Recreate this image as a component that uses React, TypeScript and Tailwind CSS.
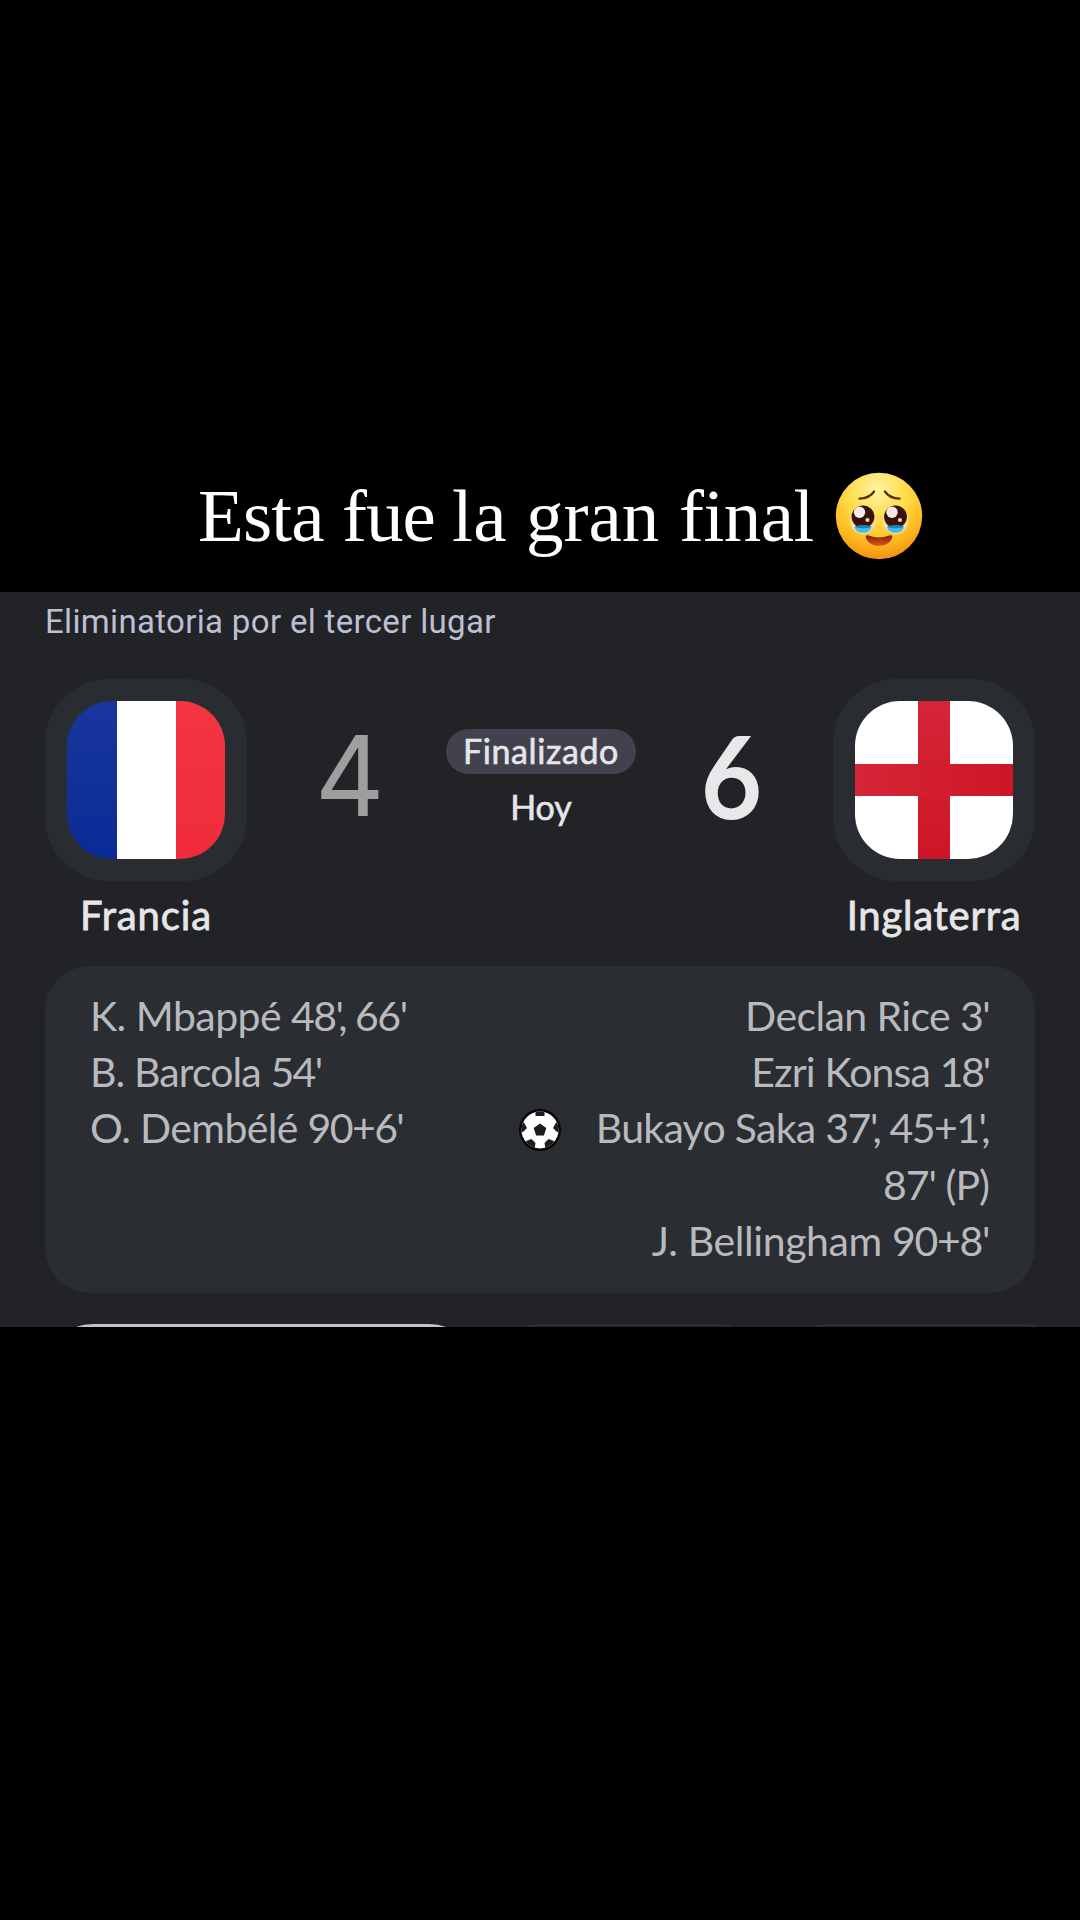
import type { ReactNode } from "react";

const words = [
  { text: "Esta", cls: "w-[144px] tracking-[-0.9px]" },
  { text: "fue", cls: "w-[110px] tracking-[-1px]" },
  { text: "la", cls: "w-[74px] tracking-[0.4px]" },
  { text: "gran", cls: "w-[153px]" },
  { text: "final", cls: "w-[156px] tracking-[-0.5px]" },
];

const homeGoals = [
  { name: "K. Mbappé", cls: "tracking-[-0.55px]", minutes: "48', 66'", minutesCls: "tracking-[-1.5px]" },
  { name: "B. Barcola", cls: "tracking-[-0.9px]", minutes: "54'", minutesCls: "tracking-[-1.6px]" },
  { name: "O. Dembélé", cls: "tracking-[-0.65px]", minutes: "90+6'", minutesCls: "tracking-[-1.6px]" },
];

const awayGoals = [
  { name: "Declan Rice", cls: "tracking-[-0.6px]", minutes: "3'", minutesCls: "tracking-[-1.6px]" },
  { name: "Ezri Konsa", cls: "tracking-[-0.85px]", minutes: "18'", minutesCls: "tracking-[-2.2px]" },
  { name: "Bukayo Saka", cls: "tracking-[-0.7px]", minutes: "37', 45+1',", minutesCls: "tracking-[-1.5px]" },
  { name: "87'", cls: "tracking-[-1px]", minutes: "(P)", minutesCls: "tracking-[-1px]" },
  { name: "J. Bellingham", cls: "tracking-[-0.4px]", minutes: "90+8'", minutesCls: "tracking-[-1.3px]" },
];

function HoldingTearsFace() {
  return (
    <svg className="h-[88px] w-[88px]" viewBox="0 0 88 88">
      <defs>
        <radialGradient id="face" cx="0.48" cy="0.2" r="0.85">
          <stop offset="0" stopColor="#fff3a6" />
          <stop offset="0.4" stopColor="#ffdc4a" />
          <stop offset="0.72" stopColor="#fdb91f" />
          <stop offset="1" stopColor="#f28413" />
        </radialGradient>
        <linearGradient id="mouth" x1="0" y1="0" x2="0" y2="1">
          <stop offset="0" stopColor="#7a2205" />
          <stop offset="1" stopColor="#e0531c" />
        </linearGradient>
      </defs>
      <circle cx="44" cy="44" r="43.2" fill="url(#face)" />
      <path d="M24.500 26.600c4-.1 11-1.600 14.500-7-3 4-8.500 6.600-14.500 7z" fill="#5b3206" stroke="#5b3206" strokeWidth="2.400" strokeLinejoin="round" />
      <path d="M64.500 26.600c-4-.1-11-1.600-14.500-7 3 4 8.500 6.600 14.500 7z" fill="#5b3206" stroke="#5b3206" strokeWidth="2.400" strokeLinejoin="round" />
      {[28, 60.5].map((x) => (
        <g key={x}>
          <ellipse cx={x} cy="48" rx="12.800" ry="14.200" fill="#f6dfa0" />
          <circle cx={x} cy="44.800" r="11.400" fill="#3b120b" />
          <path d={`M${x - 8.5} 54.500c3-1.500 14-1.500 17 0-.5 4-3.500 6.300-8.500 6.300s-8-2.300-8.500-6.300z`} fill="#42bdf0" />
          <ellipse cx={x} cy="54.700" rx="8" ry="1.500" fill="#1683bd" />
          <circle cx={x - 3.500} cy="40.300" r="5.700" fill="#f5e9e6" />
          <circle cx={x + 4.500} cy="48" r="2" fill="#f6dfa0" />
        </g>
      ))}
      <path d="M30.800 65c0-2.500 2-2 4-1.200 6 2.200 12.500 2.200 18.500 0 2-.8 4-1.300 4 1.200-1 5.500-7 8.800-13.200 8.800s-12.300-3.300-13.300-8.800z" fill="url(#mouth)" />
    </svg>
  );
}

function Ball() {
  return (
    <svg className="h-[42px] w-[42px]" viewBox="0 0 42 42">
      <defs>
        <clipPath id="ball">
          <circle cx="21" cy="21" r="18.500" />
        </clipPath>
      </defs>
      <circle cx="21" cy="21" r="21" fill="#050505" />
      <circle cx="21" cy="21" r="18.500" fill="#fff" />
      <g clipPath="url(#ball)" fill="#1b1c1e">
        <path d="M21 14.500l6.300 4.600-2.400 7.400h-7.800l-2.400-7.400z" />
        <path d="M16.500 1h9v6h-9z" />
        <path d="M0 14l5-.5 3 5.500-4 4-4-.5z" />
        <path d="M42 14l-5-.5-3 5.500 4 4 4-.5z" />
        <path d="M7 32l5.500-2 4 4-1 6h-6z" />
        <path d="M35 32l-5.500-2-4 4 1 6h6z" />
      </g>
    </svg>
  );
}

function Team({ name, nameCls, children }: { name: string; nameCls: string; children: ReactNode }) {
  return (
    <div className="flex w-[202px] flex-col items-center">
      <div className="flex h-[202px] w-[202px] items-center justify-center rounded-[64px] bg-[#292d31]">
        <div className="h-[158px] w-[158px] overflow-hidden rounded-[45px]">{children}</div>
      </div>
      <div className={nameCls}>{name}</div>
    </div>
  );
}

type Goal = (typeof homeGoals)[number];

function Goals({ goals }: { goals: Goal[] }) {
  return goals.map((g) => (
    <div key={g.name}>
      <span className={g.cls}>{g.name} </span>
      <span className={g.minutesCls}>{g.minutes}</span>
    </div>
  ));
}

export default function App() {
  return (
    <div className="flex h-[1920px] w-[1080px] flex-col bg-black font-['Lato',sans-serif]">
      <header className="flex h-[592px] items-start pl-[198px] pt-[472px]">
        <h1 className="flex h-[88px] items-center font-['Liberation_Serif',serif] text-[75px] leading-[88px] text-white">
          {words.map((w) => (
            <span key={w.text} className={w.cls}>
              {w.text}
            </span>
          ))}
        </h1>
        <HoldingTearsFace />
      </header>

      <main className="flex h-[735px] flex-col overflow-hidden bg-[#222327]">
        <div className="h-[87px] shrink-0 pl-[45px] pt-[10px] font-['Roboto',sans-serif] text-[33px] leading-[40px] tracking-[0.33px] text-[#bdbfd2]">
          Eliminatoria por el tercer lugar
        </div>

        <section className="flex h-[287px] shrink-0 justify-between pl-[45px] pr-[45px]">
          <Team
            name="Francia"
            nameCls="pt-[8px] text-[40px] leading-[52px] tracking-[0.9px] text-[#e6e6e8] [-webkit-text-stroke:0.8px_#e6e6e8]"
          >
            <div className="flex h-full">
              <div className="w-[50px] bg-linear-to-b from-[#18369c] to-[#0a2a97]" />
              <div className="w-[59px] bg-white" />
              <div className="flex-1 bg-linear-to-b from-[#f53541] to-[#ef2b3a]" />
            </div>
          </Team>
          <div className="flex w-[199px] justify-center pl-[6px] pt-[46px] font-['Inter',sans-serif] text-[111px] leading-[102px] text-[#9e9e9f]">
            <span className="scale-x-97">4</span>
          </div>
          <div className="flex w-[190px] flex-col items-center pt-[50px] text-[34px] text-[#e6e6ea] [-webkit-text-stroke:0.6px_#e6e6ea]">
            <div className="flex h-[45px] w-[190px] items-center justify-center rounded-full bg-[#41424d] pb-[2px] tracking-[0.6px]">
              Finalizado
            </div>
            <div className="pt-[9px] leading-[48px]">Hoy</div>
          </div>
          <div className="flex w-[197px] justify-center pr-[7px] pt-[44px] text-[115px] font-bold leading-[102px] text-[#e8e8ea]">
            <span className="scale-x-92">6</span>
          </div>
          <Team
            name="Inglaterra"
            nameCls="pt-[8px] text-[40px] leading-[52px] tracking-[0.75px] text-[#e6e6e8] [-webkit-text-stroke:0.8px_#e6e6e8]"
          >
            <div className="grid h-full grid-cols-[63px_32px_63px] grid-rows-[63px_32px_63px] bg-white">
              <div className="col-start-2 row-span-3 row-start-1 bg-linear-to-b from-[#d52536] to-[#ce1527]" />
              <div className="col-span-3 col-start-1 row-start-2 bg-linear-to-r from-[#d52536] to-[#ce1527]" />
            </div>
          </Team>
        </section>

        <section className="mx-[45px] grid h-[327px] shrink-0 grid-cols-[1fr_42px_1fr] rounded-[45px] bg-[#2a2d32] px-[45px] pt-[22px] text-[41px] leading-[56.2px] text-[#b9babd]">
          <div className="whitespace-nowrap">
            <Goals goals={homeGoals} />
          </div>
          <div className="pt-[121px]">
            <Ball />
          </div>
          <div className="whitespace-nowrap pr-px text-right">
            <Goals goals={awayGoals} />
          </div>
        </section>

        <nav className="flex gap-4 pl-[45px] pt-[31px]">
          <div className="h-[96px] w-[432px] shrink-0 rounded-[52px] border-[3px] border-[#c4c5c8]" />
          <div className="h-[96px] w-[272px] shrink-0 rounded-[52px] border-2 border-[#303136]" />
          <div className="h-[96px] w-[290px] shrink-0 rounded-[52px] border-2 border-[#303136]" />
        </nav>
      </main>
    </div>
  );
}
